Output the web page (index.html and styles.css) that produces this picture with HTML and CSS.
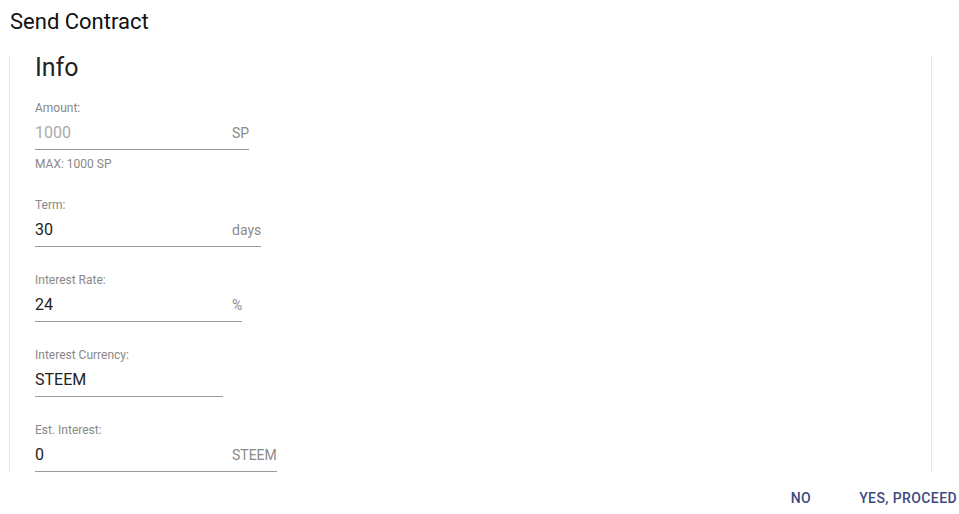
FILE: index.html
```html
<!DOCTYPE html>
<html lang="en">
<head>
  <meta charset="UTF-8">
  <meta name="viewport" content="width=device-width, initial-scale=1.0">
  <title>Send Contract</title>
  <link rel="stylesheet" href="styles.css">
</head>
<body>
  <h2 class="dialog-title">Send Contract</h2>

  <div class="dialog-content">
    <h3 class="section-title">Info</h3>

    <div class="field">
      <label>Amount:</label>
      <div class="input-row">
        <input type="text" value="1000" disabled>
        <span class="adornment">SP</span>
      </div>
      <p class="helper">MAX: 1000 SP</p>
    </div>

    <div class="field">
      <label>Term:</label>
      <div class="input-row">
        <input type="text" value="30">
        <span class="adornment">days</span>
      </div>
    </div>

    <div class="field">
      <label>Interest Rate:</label>
      <div class="input-row">
        <input type="text" value="24">
        <span class="adornment">%</span>
      </div>
    </div>

    <div class="field">
      <label>Interest Currency:</label>
      <div class="input-row select">
        <input type="text" value="STEEM">
      </div>
    </div>

    <div class="field">
      <label>Est. Interest:</label>
      <div class="input-row">
        <input type="text" value="0">
        <span class="adornment">STEEM</span>
      </div>
    </div>
  </div>

  <div class="dialog-actions">
    <button>No</button>
    <button>Yes, proceed</button>
  </div>
</body>
</html>
```

FILE: styles.css
```css
body {
  margin: 0;
  font-family: Roboto, 'Liberation Sans', sans-serif;
  background-color: #fff;
  color: #222;
  overflow: hidden;
}
.dialog-title {
  margin: 0;
  padding: 6px 10px;
  font-size: 22px;
  font-weight: 400;
  line-height: 32px;
  color: #111;
}
.dialog-content {
  margin: 12px 0 0 9px;
  width: 896px;
  height: 416px;
  padding: 1px 0 0 25px;
  border-left: 1px solid #e6e6e6;
  border-right: 1px solid #e6e6e6;
}
.section-title {
  margin: -4px 0 0;
  font-size: 25px;
  font-weight: 400;
  line-height: 30px;
  color: #222;
}
.field {
  margin-top: 25px;
}
.field:first-of-type {
  margin-top: 17px;
}
.field label {
  display: block;
  font-size: 12px;
  line-height: 16px;
  color: #888;
}
.input-row {
  display: flex;
  align-items: center;
  width: fit-content;
  margin-top: 5px;
  padding-bottom: 4px;
  border-bottom: 1px solid #9a9a9a;
}
.input-row input {
  width: 197px;
  padding: 0;
  border: none;
  outline: none;
  background: none;
  font-family: inherit;
  font-size: 16px;
  line-height: 24px;
  height: 24px;
  color: #222;
}
.input-row input:disabled {
  color: #aaa;
}
.input-row.select input {
  width: 188px;
}
.adornment {
  font-size: 14px;
  color: #8a8a8a;
}
.helper {
  margin: 6px 0 0;
  font-size: 12px;
  line-height: 16px;
  color: #888;
}
.dialog-actions {
  display: flex;
  justify-content: flex-end;
  gap: 48px;
  margin-top: 13px;
  padding-right: 2px;
}
.dialog-actions button {
  padding: 0;
  border: none;
  background: none;
  font-family: inherit;
  font-size: 14px;
  font-weight: 500;
  line-height: 24px;
  letter-spacing: 0.4px;
  text-transform: uppercase;
  color: #3d4a7e;
  cursor: pointer;
}
```
